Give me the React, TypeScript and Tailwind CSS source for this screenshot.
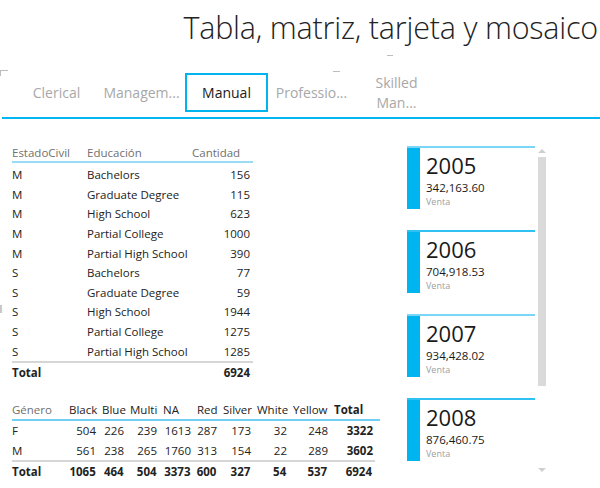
const TABS = ["Clerical", "Managem...", "Manual", "Professio..."];

const ROWS = [
  ["M", "Bachelors", "156"],
  ["M", "Graduate Degree", "115"],
  ["M", "High School", "623"],
  ["M", "Partial College", "1000"],
  ["M", "Partial High School", "390"],
  ["S", "Bachelors", "77"],
  ["S", "Graduate Degree", "59"],
  ["S", "High School", "1944"],
  ["S", "Partial College", "1275"],
  ["S", "Partial High School", "1285"],
];

const COLS = [
  { name: "Black", w: "w-[33px]" },
  { name: "Blue", w: "w-[28px]" },
  { name: "Multi", w: "w-[33px]" },
  { name: "NA", w: "w-[34px]" },
  { name: "Red", w: "w-[26px]" },
  { name: "Silver", w: "w-[34px]" },
  { name: "White", w: "w-[36px]" },
  { name: "Yellow", w: "w-[41px]" },
];

const MATRIX = [
  { label: "F", values: ["504", "226", "239", "1613", "287", "173", "32", "248"], total: "3322" },
  { label: "M", values: ["561", "238", "265", "1760", "313", "154", "22", "289"], total: "3602" },
];
const MATRIX_TOTAL = ["1065", "464", "504", "3373", "600", "327", "54", "537"];

const CARDS = [
  { year: "2005", value: "342,163.60" },
  { year: "2006", value: "704,918.53" },
  { year: "2007", value: "934,428.02" },
  { year: "2008", value: "876,460.75" },
];

function Tab({ label }: { label: string }) {
  const active = label === "Manual";
  return (
    <div className="w-[85px] h-[39px] flex items-center justify-center">
      <div
        className={
          active
            ? "w-[83px] h-[39px] border-2 border-[#00b4ef] flex items-center justify-center text-[#1a1a1a]"
            : "text-[#a8a8a8]"
        }
      >
        {label}
      </div>
    </div>
  );
}

function MatrixRow({
  label,
  values,
  total,
  bold,
}: {
  label: string;
  values: string[];
  total: string;
  bold?: boolean;
}) {
  return (
    <div className={`flex h-[19.5px] items-center ${bold ? "font-bold" : ""}`}>
      <div className="w-[54px]">{label}</div>
      {values.map((v, i) => (
        <div key={i} className={`${COLS[i].w} text-right pr-[3px]`}>
          {v}
        </div>
      ))}
      <div className="w-[45px] text-right pr-[3px] font-bold">{total}</div>
    </div>
  );
}

export default function App() {
  return (
    <div
      className="relative w-[600px] h-[488px] bg-white overflow-hidden text-[#222]"
      style={{ fontFamily: '"Open Sans", "Noto Sans", sans-serif' }}
    >
      {/* tiny slicer marks */}
      <div className="absolute left-[387px] top-[55px] w-[6px] h-px bg-[#bdbdbd]" />
      <div className="absolute left-[333px] top-[71px] w-[7px] h-px bg-[#bdbdbd]" />
      <div className="absolute left-0 top-[70px] w-[8px] h-[6px] border-l border-t border-[#bdbdbd]" />
      <div className="absolute left-0 top-[305px] w-[2px] h-[8px] bg-[#c8c8c8]" />

      <div className="h-[60px] flex justify-end items-start pr-[2px] pt-[4px]">
        <h1 className="text-[30.5px] font-light leading-[46px] tracking-[-0.2px] text-[#222]">
          Tabla, matriz, tarjeta y mosaico
        </h1>
      </div>

      <div className="ml-[2px] h-[59px] border-b-2 border-[#00b7f1] pt-[13px] pl-[12px] flex items-start text-[14px]">
        {TABS.map((t) => (
          <Tab key={t} label={t} />
        ))}
        <div className="w-[85px] h-[39px] flex flex-col items-center justify-center text-[#a8a8a8] leading-[20px]">
          <span>Skilled</span>
          <span>Man...</span>
        </div>
      </div>

      <div className="flex">
        <div className="w-[407px] pl-[12px] pt-[25px] text-[11.5px]">
          <div className="w-[241px]">
            <div className="flex h-[19px] items-center border-b-2 border-[#9adcf5] text-[#707070]">
              <div className="w-[75px]">EstadoCivil</div>
              <div className="w-[105px]">Educación</div>
              <div className="flex-1">Cantidad</div>
            </div>
            <div className="pt-[2px]">
              {ROWS.map((r, i) => (
                <div key={i} className="flex h-[19.6px] items-center">
                  <div className="w-[75px]">{r[0]}</div>
                  <div className="flex-1">{r[1]}</div>
                  <div className="pr-[3px]">{r[2]}</div>
                </div>
              ))}
            </div>
            <div className="flex h-[21px] items-center border-t-2 border-[#d6d6d6] font-bold">
              <div className="flex-1">Total</div>
              <div className="pr-[3px]">6924</div>
            </div>
          </div>

          <div className="mt-[19px] w-[368px]">
            <div className="flex h-[20px] items-center border-b-2 border-[#6fd0f3]">
              <div className="w-[54px] text-[#707070]">Género</div>
              {COLS.map((c) => (
                <div key={c.name} className={`${c.w} pl-[3px]`}>
                  {c.name}
                </div>
              ))}
              <div className="w-[45px] pl-[3px] font-bold">Total</div>
            </div>
            {MATRIX.map((m) => (
              <MatrixRow key={m.label} label={m.label} values={m.values} total={m.total} />
            ))}
            <div className="border-t-2 border-[#d6d6d6] w-[363px]">
              <MatrixRow label="Total" values={MATRIX_TOTAL} total="6924" bold />
            </div>
          </div>
        </div>

        <div className="pt-[27px] flex gap-[3px]">
          <div className="w-[128px] flex flex-col gap-[21px]">
            {CARDS.map((c, i) => (
              <div
                key={c.year}
                className={`h-[63px] flex border-t-2 ${i % 2 === 0 ? "border-[#7ad6f6]" : "border-[#2fc1f1]"}`}
              >
                <div className="w-[13px] bg-[#00b4ef]" />
                <div className="pl-[6px] pt-[3px]">
                  <div className="text-[22px] leading-[28px] text-[#1a1a1a]">{c.year}</div>
                  <div className="text-[11.5px] leading-[17px] text-[#1a1a1a]">{c.value}</div>
                  <div className="text-[9px] leading-[12px] text-[#a0a0a0]">Venta</div>
                </div>
              </div>
            ))}
          </div>
          <div className="w-[8px] flex flex-col items-center pt-[3px]">
            <div className="w-0 h-0 border-l-[4px] border-r-[4px] border-b-[4px] border-l-transparent border-r-transparent border-b-[#cfcfcf]" />
            <div className="mt-[4px] w-[8px] h-[229px] bg-[#dadada]" />
            <div className="mt-[82px] w-0 h-0 border-l-[4px] border-r-[4px] border-t-[4px] border-l-transparent border-r-transparent border-t-[#cfcfcf]" />
          </div>
        </div>
      </div>
    </div>
  );
}
